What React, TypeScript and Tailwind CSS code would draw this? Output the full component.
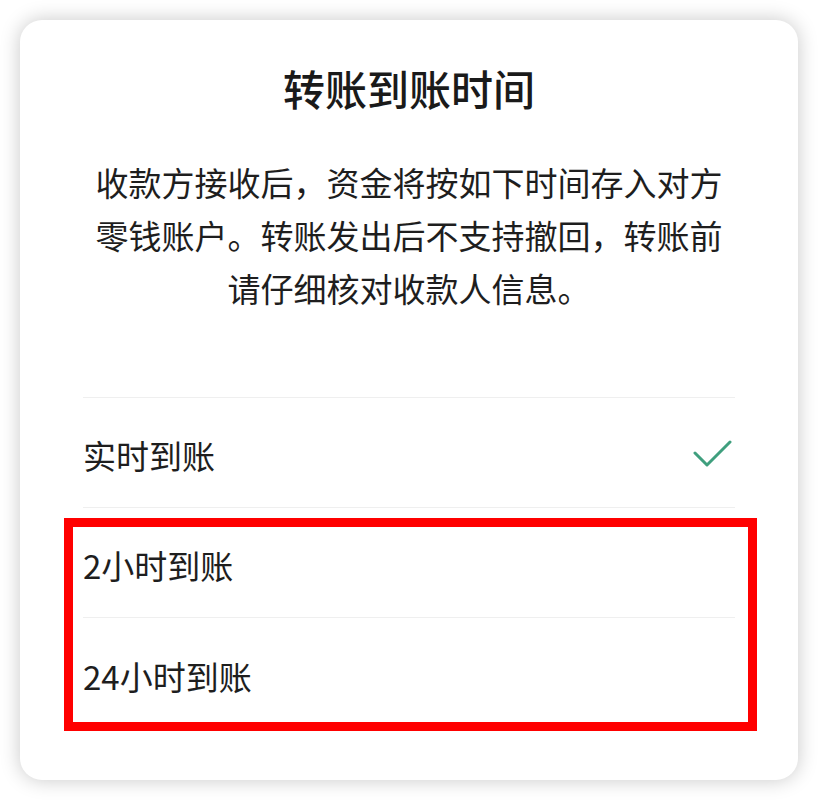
const font = { fontFamily: '"Noto Sans CJK SC", "Noto Sans", sans-serif' };

const CheckIcon = () => (
  <svg width="40" height="30" viewBox="0 0 40 30" fill="none">
    <path d="M3 13 L15 25 L38 2" stroke="#3f9f7e" strokeWidth="3" strokeLinecap="round" strokeLinejoin="round" />
  </svg>
);

const options = [
  { label: "实时到账", checked: true },
  { label: "2小时到账", checked: false },
  { label: "24小时到账", checked: false },
];

export default function App() {
  return (
    <div className="min-h-[800px] bg-white p-5" style={font}>
      <div className="relative h-[760px] rounded-[22px] bg-white px-[63px] pt-10 shadow-[0_0_20px_rgba(0,0,0,0.22)]">
        {/* title */}
        <h1 className="text-center text-[42px] font-medium leading-[56px] text-[#1a1a1a]">转账到账时间</h1>

        {/* description */}
        <div className="mt-10 text-center text-[33px] leading-[53px] text-[#1e1e1e]">
          <p>收款方接收后，资金将按如下时间存入对方</p>
          <p>零钱账户。转账发出后不支持撤回，转账前</p>
          <p>请仔细核对收款人信息。</p>
        </div>

        {/* options */}
        <div className="mt-[82px] border-t border-[#efefef]">
          {options.map((o, i) => (
            <div
              key={o.label}
              className={`flex h-[110px] items-center justify-between text-[33px] text-[#1e1e1e] ${i < options.length - 1 ? "border-b border-[#efefef]" : ""}`}
            >
              <span className="pt-[7px]">{o.label}</span>
              {o.checked && (
                <span className="mr-[3px] pt-[4px]">
                  <CheckIcon />
                </span>
              )}
            </div>
          ))}
        </div>

        {/* highlight */}
        <div className="pointer-events-none absolute left-[44px] top-[498px] h-[213px] w-[693px] border-[9px] border-[#ff0000]" />
      </div>
    </div>
  );
}
